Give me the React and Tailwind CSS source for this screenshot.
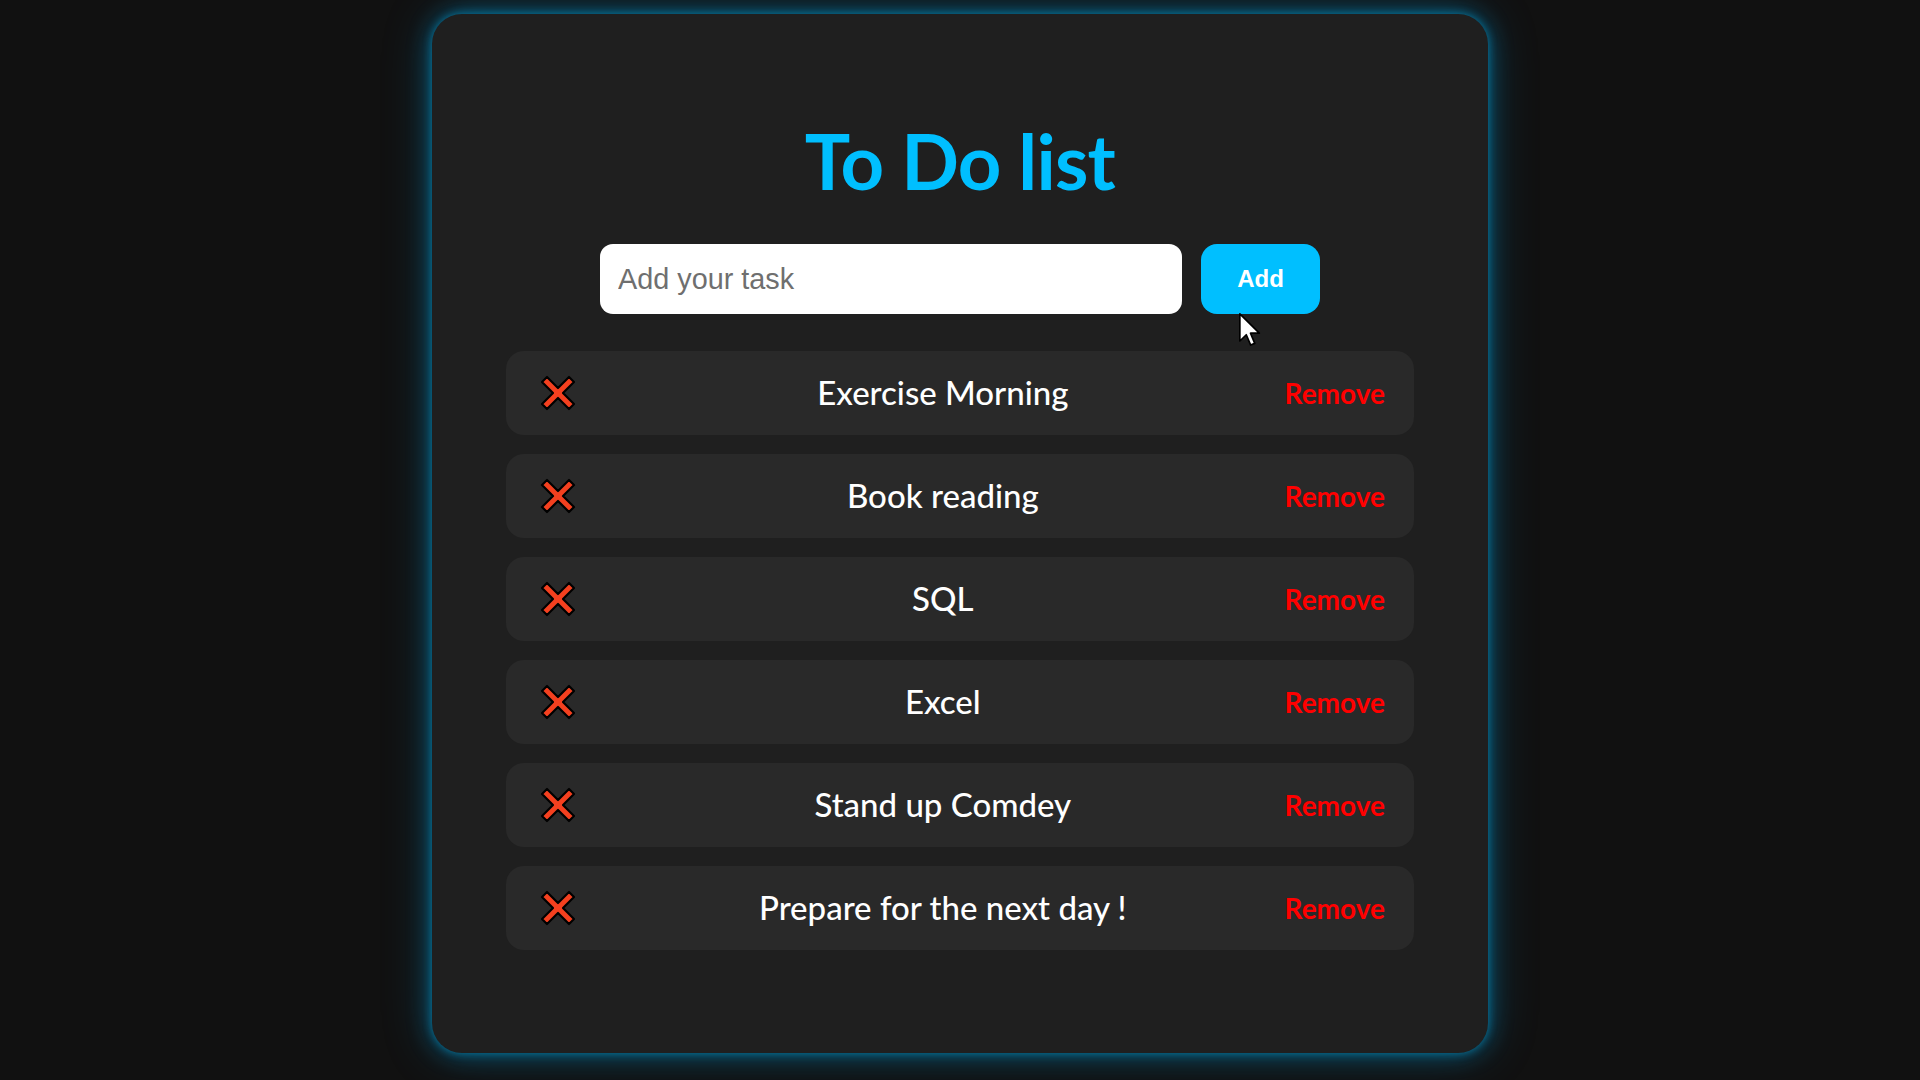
import React from "react";

const tasks = [
  "Exercise Morning",
  "Book reading",
  "SQL",
  "Excel",
  "Stand up Comdey",
  "Prepare for the next day !",
];

function XIcon() {
  return (
    <svg width="40" height="40" viewBox="0 0 40 40" className="shrink-0">
      <polygon
        points="4,9 9,4 20,15 31,4 36,9 25,20 36,31 31,36 20,25 9,36 4,31 15,20"
        fill="#f4401f"
        stroke="#000"
        strokeWidth="2.2"
        strokeLinejoin="round"
      />
    </svg>
  );
}

function Cursor() {
  return (
    <svg
      width="22"
      height="34"
      viewBox="0 0 13 20"
      className="absolute left-[807px] top-[299px]"
    >
      <path
        d="M0.5 0.5 L0.5 16.5 L4.3 12.8 L6.9 18.9 L9.3 17.9 L6.8 11.9 L12 11.9 Z"
        fill="#fff"
        stroke="#000"
        strokeWidth="1"
        strokeLinejoin="round"
      />
    </svg>
  );
}

export default function App() {
  return (
    <div className="min-h-screen w-full overflow-hidden bg-[#111111] pt-[14px]">
      <div className="relative mx-auto flex h-[1039px] w-[1056px] flex-col items-center rounded-[30px] bg-[#1f1f1f] pt-[107px] shadow-[0_0_8px_rgba(0,170,230,0.5),0_0_24px_rgba(0,160,220,0.45),0_0_50px_rgba(0,140,200,0.3)]">
        <h1 className="font-['Lato',sans-serif] text-[76px] font-bold leading-[80px] tracking-[-0.01em] text-[#00bfff]">
          To Do list
        </h1>
        <div className="mt-[43px] flex gap-[19px]">
          <input
            type="text"
            placeholder="Add your task"
            className="h-[70px] w-[582px] rounded-[13px] bg-white px-[18px] font-['Liberation_Sans',Arial,sans-serif] text-[28.8px] text-[#333] outline-none placeholder:text-[#6f6f6f]"
          />
          <button className="h-[70px] w-[119px] rounded-[16px] bg-[#00bfff] font-['Liberation_Sans',Arial,sans-serif] text-[24px] font-bold text-white">
            Add
          </button>
        </div>
        <div className="mt-[37px] flex w-[908px] flex-col gap-[19px]">
          {tasks.map((t) => (
            <div
              key={t}
              className="flex h-[84px] items-center rounded-[18px] bg-[#292929] pl-[32px] pr-[29px]"
            >
              <XIcon />
              <div className="ml-[23px] flex-1 text-center font-['Lato',sans-serif] text-[33px] font-medium text-white">
                {t}
              </div>
              <span className="font-['Lato',sans-serif] text-[28px] font-bold text-[#ff0000]">
                Remove
              </span>
            </div>
          ))}
        </div>
        <Cursor />
      </div>
    </div>
  );
}
